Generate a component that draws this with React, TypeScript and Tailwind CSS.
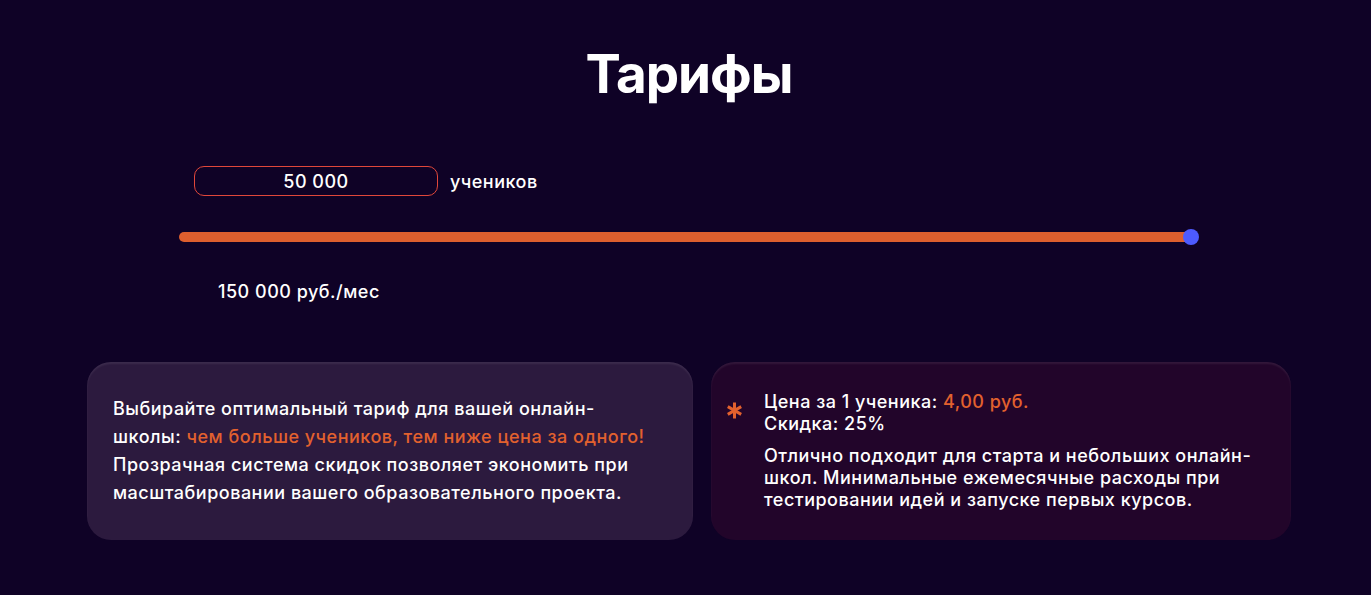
import React from 'react';

const orange = 'text-[#e2612e]';

const Asterisk: React.FC = () => (
  <svg width="15" height="17" viewBox="0 0 15 17" className="shrink-0">
    <g stroke="#e2612e" strokeWidth="3">
      <line x1="7.5" y1="0.5" x2="7.5" y2="16.5" />
      <line x1="0.8" y1="4.6" x2="14.2" y2="12.4" />
      <line x1="0.8" y1="12.4" x2="14.2" y2="4.6" />
    </g>
  </svg>
);

const App: React.FC = () => {
  const [students] = React.useState('50 000');

  return (
    <div className="min-h-[595px] bg-[#0f0226] text-white font-['Inter','Noto_Sans',sans-serif] font-medium tracking-[0.5px] pl-[7px]">
      <div className="mx-auto w-[1204px] pt-[39px]">
        <h1 className="text-center text-[53px] font-bold leading-[70px] tracking-[-0.02em]">Тарифы</h1>

        {/* Student count + slider */}
        <div className="mt-[57px] px-[92px]">
          <div className="flex items-center gap-3 pl-[15px]">
            <div className="flex h-[30px] w-[244px] items-center justify-center rounded-[10px] border border-[#e0473a] text-[18px]">
              {students}
            </div>
            <span className="text-[18px]">учеников</span>
          </div>

          <div className="relative mt-[33px] h-[16px]">
            <div className="absolute left-0 right-[6px] top-[3px] h-[10px] rounded-full bg-[#dd5f2e]" />
            <div className="absolute right-0 top-0 h-[16px] w-[16px] rounded-full bg-[#4d5bff]" />
          </div>

          <div className="mt-[35px] pl-[39px] text-[18px] leading-[24px]">150 000 руб./мес</div>
        </div>

        {/* Info cards */}
        <div className="mt-[58px] flex gap-[18px]">
          <div className="flex h-[178px] w-[606px] items-center rounded-[24px] bg-[#2c1a3e] px-[26px] shadow-[inset_0_2px_2px_rgba(255,255,255,0.08)]">
            <p className="max-w-[535px] text-[18px] leading-[28px]">
              Выбирайте оптимальный тариф для вашей онлайн-школы:{' '}
              <span className={orange}>чем больше учеников, тем ниже цена за одного!</span> Прозрачная система
              скидок позволяет экономить при масштабировании вашего образовательного проекта.
            </p>
          </div>

          <div className="flex h-[178px] flex-1 items-center rounded-[24px] bg-[#22052a] pl-[16px] pr-[24px] shadow-[inset_0_2px_2px_rgba(255,255,255,0.08)]">
            <div className="flex gap-[22px]">
              <div className="pt-[11px]">
                <Asterisk />
              </div>
              <div className="text-[18px] leading-[22px]">
                <div>
                  Цена за 1 ученика: <span className={orange}>4,00 руб.</span>
                </div>
                <div>Скидка: 25%</div>
                <p className="mt-[10px]">
                  Отлично подходит для старта и небольших онлайн-школ. Минимальные ежемесячные расходы при
                  тестировании идей и запуске первых курсов.
                </p>
              </div>
            </div>
          </div>
        </div>
      </div>
    </div>
  );
};

export default App;
